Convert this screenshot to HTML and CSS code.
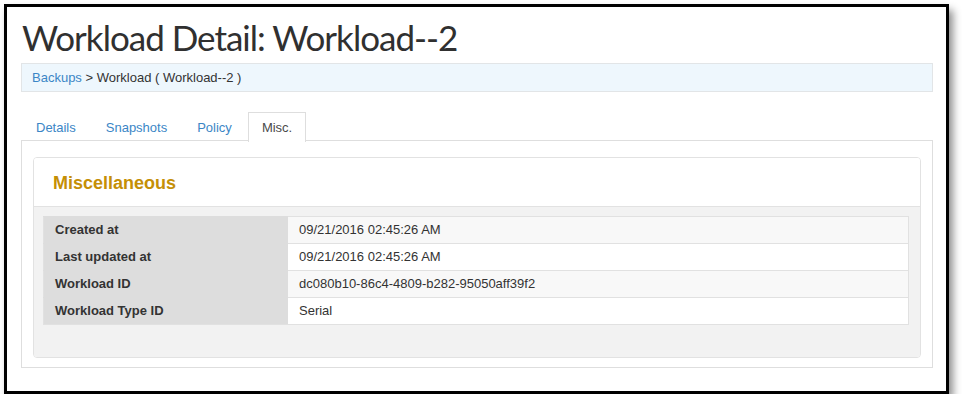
FILE: index.html
```html
<!DOCTYPE html>
<html>
<head>
<meta charset="utf-8">
<link rel="stylesheet" href="styles.css">
</head>
<body>
<div class="frame">
  <h1 class="title">Workload Detail: Workload--2</h1>
  <div class="breadcrumb"><a class="crumb-link">Backups</a> &gt; Workload ( Workload--2 )</div>
  <ul class="tabs">
    <li class="tab"><a>Details</a></li>
    <li class="tab"><a>Snapshots</a></li>
    <li class="tab"><a>Policy</a></li>
    <li class="tab active"><a>Misc.</a></li>
  </ul>
  <div class="pane">
    <div class="panel">
      <div class="panel-head">Miscellaneous</div>
      <div class="panel-body">
        <table class="info">
          <tr class="odd"><th>Created at</th><td>09/21/2016 02:45:26 AM</td></tr>
          <tr><th>Last updated at</th><td>09/21/2016 02:45:26 AM</td></tr>
          <tr class="odd"><th>Workload ID</th><td>dc080b10-86c4-4809-b282-95050aff39f2</td></tr>
          <tr><th>Workload Type ID</th><td>Serial</td></tr>
        </table>
      </div>
    </div>
  </div>
</div>
</body>
</html>
```
FILE: styles.css
```css
html, body {
  margin: 0;
  padding: 0;
  background: #fff;
}
body {
  font-family: "Liberation Sans", Arial, sans-serif;
  font-size: 13px;
  color: #333;
}
.frame {
  margin: 4px 0 0 4px;
  height: 384px;
  border: 3px solid #000;
  box-shadow: 4px 6px 8px rgba(0, 0, 0, 0.45);
  padding: 0 13px 0 14px;
  box-sizing: content-box;
  width: 912px;
  background: #fff;
}
.title {
  margin: 0;
  padding-top: 8px;
  height: 48px;
  font-family: "Lato", sans-serif;
  font-weight: 400;
  font-size: 35px;
  letter-spacing: -1px;
  line-height: 45px;
  color: #303030;
  padding-left: 1px;
}
.breadcrumb {
  height: 27px;
  line-height: 27px;
  background: #eef7fd;
  border: 1px solid #e2e5e7;
  padding-left: 10px;
  color: #333;
}
.crumb-link {
  color: #3b86c6;
}
.tabs {
  list-style: none;
  margin: 20px 0 0;
  padding: 0;
  display: flex;
  height: 28px;
}
.tab {
  margin-right: 2px;
}
.tab a {
  display: block;
  height: 28px;
  line-height: 30px;
  padding: 0 13px;
  border: 1px solid transparent;
  border-bottom: none;
  color: #3b86c6;
}
.tab:first-child a {
  padding-left: 14px;
}
.tab.active a {
  background: #fff;
  border-color: #dedede;
  color: #4a4a4a;
  height: 29px;
  position: relative;
  z-index: 1;
}
.pane {
  border: 1px solid #dedede;
  padding: 16px 11px 9px;
  height: 201px;
}
.panel {
  border: 1px solid #e2e2e2;
  border-radius: 4px;
  overflow: hidden;
  height: 199px;
  display: flex;
  flex-direction: column;
}
.panel-head {
  height: 48px;
  line-height: 50px;
  padding-left: 19px;
  font-weight: bold;
  font-size: 18px;
  color: #c58f06;
  background: #fff;
  border-bottom: 1px solid #e2e2e2;
}
.panel-body {
  flex: 1;
  background: #f2f2f2;
  padding: 9px 11px 0 9px;
}
.info {
  width: 100%;
  border-collapse: collapse;
  border: 1px solid #e1e1e1;
}
.info th, .info td {
  height: 25px;
  padding: 0 11px;
  text-align: left;
  border-top: 1px solid #e1e1e1;
  line-height: 26px;
}
.info tr:nth-child(2n) th, .info tr:nth-child(2n) td {
  height: 26px;
}
.info th {
  width: 222px;
  padding-left: 11px;
  background: #dddddd;
  border-top-color: #dddddd;
  font-weight: bold;
  color: #333;
}
.info td {
  background: #fff;
  color: #333;
}
.info tr.odd td {
  background: #f8f8f8;
}
```
